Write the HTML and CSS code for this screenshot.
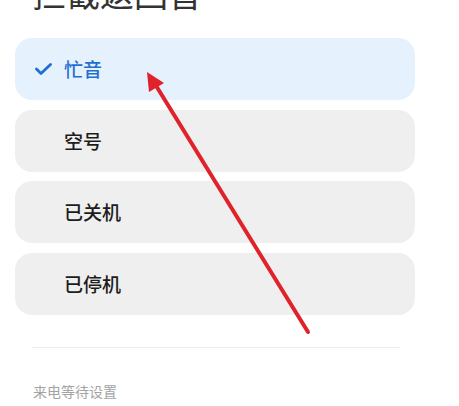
FILE: index.html
```html
<!DOCTYPE html>
<html lang="zh">
<head>
<meta charset="utf-8">
<link rel="stylesheet" href="styles.css">
</head>
<body>
<div class="page">
  <h1 class="title">拦截返回音</h1>
  <ul class="options">
    <li class="option selected">
      <svg class="check" width="17" height="12" viewBox="0 0 17 12"><path d="M1.5 6 L6 10.5 L15.5 1.5" fill="none" stroke="#1f6fd0" stroke-width="2.8" stroke-linecap="round" stroke-linejoin="round"/></svg>
      <span class="label">忙音</span>
    </li>
    <li class="option"><span class="label">空号</span></li>
    <li class="option"><span class="label">已关机</span></li>
    <li class="option"><span class="label">已停机</span></li>
  </ul>
  <div class="divider"></div>
  <div class="section">来电等待设置</div>
  <svg class="arrow" width="459" height="406" viewBox="0 0 459 406">
    <line x1="308" y1="332" x2="155" y2="84" stroke="#e0222a" stroke-width="4" stroke-linecap="round"/>
    <polygon points="147,72 164,83 149,92" fill="#e0222a"/>
  </svg>
</div>
</body>
</html>
```
FILE: styles.css
```css
html, body {
  margin: 0;
  padding: 0;
  background: #ffffff;
  overflow: hidden;
}
body {
  font-family: "Noto Sans CJK SC", "Noto Sans", sans-serif;
  width: 459px;
  height: 406px;
}
.page {
  position: relative;
  display: flow-root;
  width: 459px;
  height: 406px;
}
.title {
  margin: -27px 0 0 32px;
  font-size: 34px;
  line-height: 40px;
  font-weight: 400;
  color: #333333;
}
.options {
  list-style: none;
  margin: 25px 0 0 15px;
  padding: 0;
  width: 400px;
  display: flex;
  flex-direction: column;
  gap: 9.6px;
}
.option {
  height: 62px;
  border-radius: 17px;
  background: #efefef;
  display: flex;
  align-items: center;
  padding-left: 49px;
  box-sizing: border-box;
  position: relative;
}
.option.selected {
  background: #e5f1fd;
  padding-left: 20px;
  gap: 12px;
}
.check {
  display: block;
}
.label {
  font-size: 19px;
  font-weight: 500;
  color: #1c1c1c;
  line-height: 24px;
}
.selected .label {
  color: #1f6fd0;
}
.divider {
  margin: 32px 59px 0 32px;
  height: 1px;
  background: #ececec;
}
.section {
  margin: 33px 0 0 33px;
  font-size: 14px;
  line-height: 20px;
  color: #a3a3a3;
}
.arrow {
  position: absolute;
  left: 0;
  top: 0;
  pointer-events: none;
}
```
